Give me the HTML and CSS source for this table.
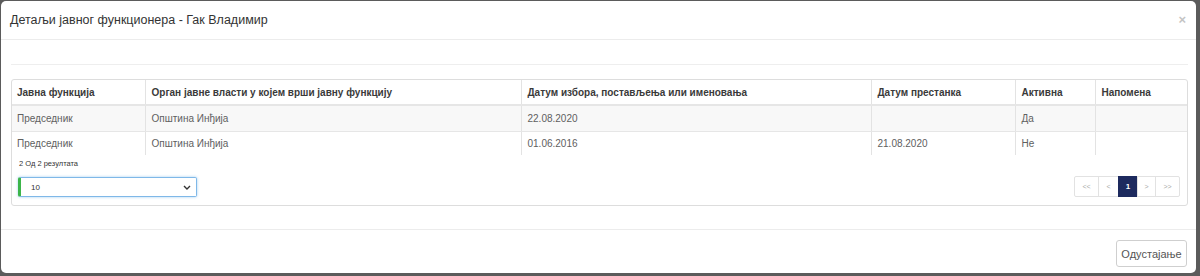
FILE: index.html
```html
<!DOCTYPE html>
<html lang="sr">
<head>
<meta charset="utf-8">
<title>Детаљи јавног функционера</title>
<link rel="stylesheet" href="styles.css">
</head>
<body>
<div class="modal">
  <div class="modal-header">
    <h4 class="modal-title">Детаљи јавног функционера - Гак Владимир</h4>
    <span class="close">×</span>
  </div>
  <div class="modal-body">
    <div class="rule"></div>
    <div class="panel">
      <table class="grid">
        <colgroup>
          <col class="c1"><col class="c2"><col class="c3"><col class="c4"><col class="c5"><col>
        </colgroup>
        <thead>
          <tr>
            <th>Јавна функција</th>
            <th>Орган јавне власти у којем врши јавну функцију</th>
            <th>Датум избора, постављења или именовања</th>
            <th>Датум престанка</th>
            <th>Активна</th>
            <th>Напомена</th>
          </tr>
        </thead>
        <tbody>
          <tr class="odd">
            <td>Председник</td>
            <td>Општина Инђија</td>
            <td>22.08.2020</td>
            <td></td>
            <td>Да</td>
            <td></td>
          </tr>
          <tr>
            <td>Председник</td>
            <td>Општина Инђија</td>
            <td>01.06.2016</td>
            <td>21.08.2020</td>
            <td>Не</td>
            <td></td>
          </tr>
        </tbody>
      </table>
      <div class="panel-foot">
        <div class="count">2 Од 2 резултата</div>
        <div class="foot-row">
          <div class="select">
            <span class="select-val">10</span>
            <svg class="chev" width="8" height="5" viewBox="0 0 8 5"><path d="M1 1l3 3 3-3" fill="none" stroke="#333" stroke-width="1.4"/></svg>
          </div>
          <ul class="pager">
            <li>&lt;&lt;</li>
            <li>&lt;</li>
            <li class="active">1</li>
            <li>&gt;</li>
            <li>&gt;&gt;</li>
          </ul>
        </div>
      </div>
    </div>
  </div>
  <div class="modal-footer">
    <button class="btn">Одустајање</button>
  </div>
</div>
</body>
</html>
```

FILE: styles.css
```css
* { box-sizing: border-box; }
html, body { margin: 0; padding: 0; }
body {
  background: #5b5b5b;
  font-family: "Liberation Sans", Arial, sans-serif;
  color: #333;
  height: 276px;
  padding: 1px 4px 3px 1px;
}
.modal {
  background: #fff;
  border-radius: 5px;
  height: 272px;
  display: flex;
  flex-direction: column;
}
.modal-header {
  flex: 0 0 39px;
  border-bottom: 1px solid #ececec;
  display: flex;
  align-items: center;
  justify-content: space-between;
  padding: 0 10px 1px 9px;
}
.modal-title {
  margin: 0;
  font-size: 12.5px;
  font-weight: normal;
  color: #333;
}
.close {
  font-size: 13px;
  font-weight: bold;
  color: #c4c4c4;
  line-height: 1;
  margin-top: -1px;
}
.modal-body {
  flex: 0 0 auto;
  padding: 24px 8px 0 10px;
}
.rule {
  height: 1px;
  background: #eeeeee;
}
.panel {
  margin-top: 14px;
  border: 1px solid #dddddd;
  border-radius: 3px;
  height: 127px;
}
.grid {
  width: 100%;
  border-collapse: collapse;
  table-layout: fixed;
  font-size: 10px;
}
.c1 { width: 133px; }
.c2 { width: 376px; }
.c3 { width: 350px; }
.c4 { width: 144px; }
.c5 { width: 80px; }
.grid th, .grid td {
  text-align: left;
  padding: 0 6px;
  height: 26px;
  border-left: 1px solid #e3e3e3;
  white-space: nowrap;
}
.grid th:first-child, .grid td:first-child { border-left: none; padding-left: 5px; }
.grid th {
  font-weight: bold;
  color: #3a3a3a;
  border-bottom: 2px solid #e6e6e6;
  height: 25px;
}
.grid td { color: #606060; }
.grid tbody tr.odd td { background: #f8f8f8; border-bottom: 1px solid #e6e6e6; height: 26px; }
.grid tbody tr:last-child td { height: 24px; }
.panel-foot {
  padding: 2px 8px 0 6px;
}
.count {
  font-size: 7.5px;
  color: #333;
  height: 14px;
  line-height: 14px;
  padding-left: 1px;
}
.foot-row {
  margin-top: 6px;
  display: flex;
  justify-content: space-between;
  align-items: center;
}
.select {
  width: 179px;
  height: 20px;
  border: 1px solid #7fb8e8;
  border-left: 3px solid #3cb54a;
  border-radius: 2px;
  box-shadow: 0 0 3px rgba(102, 175, 233, 0.6);
  display: flex;
  align-items: center;
  justify-content: space-between;
  padding: 0 5px 0 10px;
  font-size: 8px;
  color: #333;
}
.chev { display: block; }
.pager {
  list-style: none;
  margin: 0;
  padding: 0;
  display: flex;
  margin-right: -1px;
  margin-top: -1px;
}
.pager li {
  height: 21px;
  border: 1px solid #e2e2e2;
  margin-left: -1px;
  display: flex;
  align-items: center;
  justify-content: center;
  font-size: 7px;
  color: #aaa;
  padding: 0 6px;
}
.pager li:first-child { border-radius: 2px 0 0 2px; width: 25px; }
.pager li:nth-child(2) { width: 21px; }
.pager li:nth-child(4) { width: 19px; }
.pager li:last-child { border-radius: 0 2px 2px 0; width: 25px; }
.pager li.active {
  background: #1d2a5e;
  border-color: #1d2a5e;
  color: #fff;
  font-weight: bold;
  font-size: 8px;
  width: 20px;
}
.modal-footer {
  flex: 1 0 auto;
  border-top: 1px solid #ececec;
  margin-top: 23px;
  padding: 10px 9px 0 0;
  display: flex;
  justify-content: flex-end;
  align-items: flex-start;
}
.btn {
  font-family: "Liberation Sans", Arial, sans-serif;
  font-size: 11px;
  color: #555;
  background: #fff;
  border: 1px solid #cfcfcf;
  border-radius: 3px;
  height: 27px;
  width: 71px;
  padding: 0;
}
```
